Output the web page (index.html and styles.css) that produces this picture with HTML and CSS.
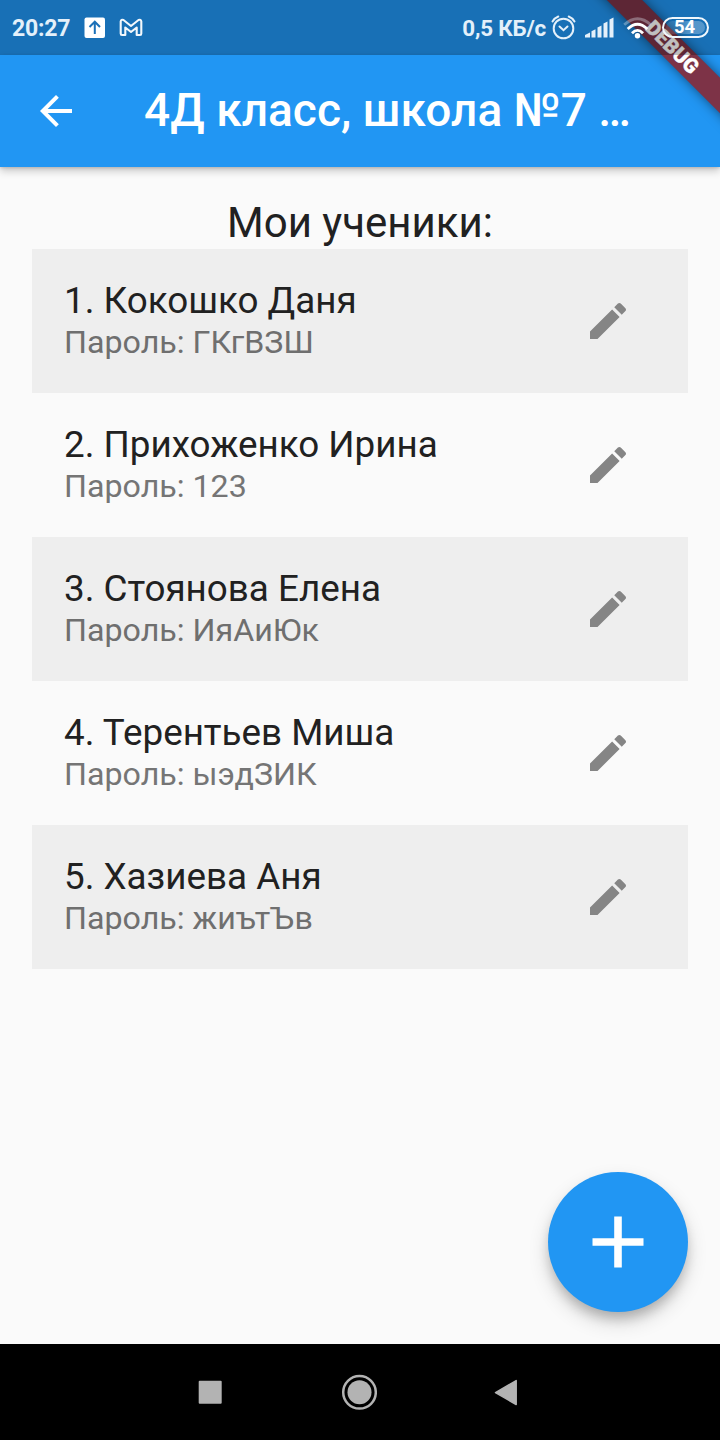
FILE: index.html
```html
<!DOCTYPE html>
<html lang="ru">
<head>
<meta charset="utf-8">
<title>Мои ученики</title>
<link rel="stylesheet" href="styles.css">
</head>
<body>
<svg class="defs" width="0" height="0"><symbol id="pencil" viewBox="0 0 24 24"><path d="M3 17.250V21h3.750L17.810 9.940l-3.750-3.750L3 17.250zM20.710 7.040c.39-.39.39-1.020 0-1.410l-2.340-2.340c-.39-.39-1.020-.39-1.410 0l-1.830 1.830 3.750 3.750 1.830-1.830z"/></symbol></svg>
<div class="screen">
  <div class="banner-clip"><div class="banner">DEBUG</div></div>
  <header class="statusbar">
    <span class="clock">20:27</span>
    <svg class="upload" width="22" height="22" viewBox="0 0 22 22"><rect x=".5" y=".5" width="20.5" height="20.5" rx="2" fill="#fff"/><path d="M10.8 17V5M5.500 10l5.300-5.300L16 10" fill="none" stroke="#1b70b8" stroke-width="2"/></svg>
    <svg class="mail" width="24" height="20" viewBox="0 0 24 20"><path d="M1.700 3.500Q2 1 4.500 2L12 8l7.500-6Q22 1 22.300 3.500V15.500Q22.300 17 21 17H17.700V9.500L12 14 6.300 9.500V17H3Q1.700 17 1.700 15.500Z" fill="none" stroke="#f3f8fc" stroke-width="2.100" stroke-linejoin="round"/></svg>
    <span class="speed">0,5 КБ/с</span>
    <svg class="alarm" width="25" height="25" viewBox="0 0 25 25" fill="none" stroke="#e4f0fa" stroke-width="2"><circle cx="12.500" cy="13.500" r="9.800"/><path d="M8.500 11.500l4 3.700 4-3.700M1.500 6.500Q3.500 3 7.300 1.500M17.700 1.500Q21.500 3 23.500 6.500" stroke-linecap="round"/></svg>
    <svg class="signal" width="29" height="21" viewBox="0 0 29 21" fill="#e4f0fa"><path d="M0 20.500v-2.500l5-2.500v5zM6.500 20.500v-6.300l4-2v8.300zM12.500 20.500v-10l4-2v12zM18.500 20.500V6.500l4-2v16zM24.500 20.500V2.500l4-2v20z"/></svg>
    <svg class="wifi" width="30" height="22" viewBox="0 0 30 22" fill="none" stroke="#e4f0fa" stroke-width="2.800"><path d="M1.200 7.800Q14.500-4.200 27.800 7.800" opacity=".35"/><path d="M4.700 12Q14.500 2.500 24.300 12M9 16.200Q14.500 10.500 20 16.200" stroke="#fff"/><circle cx="14.500" cy="18.700" r="2.700" fill="#fff" stroke="none"/></svg>
    <span class="battery"><span class="charge">54</span></span>
  </header>
  <div class="appbar">
    <svg class="back" width="48" height="48" viewBox="0 0 24 24"><path fill="#fff" d="M20 11H7.830l5.590-5.590L12 4l-8 8 8 8 1.410-1.410L7.830 13H20v-2z"/></svg>
    <h1 class="title">4Д класс, школа №7 …</h1>
  </div>
  <main class="content">
    <h2 class="heading">Мои ученики:</h2>
    <ul class="students">
      <li class="student"><div class="info"><div class="name">1. Кокошко Даня</div><div class="password">Пароль: ГКгВЗШ</div></div><svg class="edit"><use href="#pencil"/></svg></li>
      <li class="student"><div class="info"><div class="name">2. Прихоженко Ирина</div><div class="password">Пароль: 123</div></div><svg class="edit"><use href="#pencil"/></svg></li>
      <li class="student"><div class="info"><div class="name">3. Стоянова Елена</div><div class="password">Пароль: ИяАиЮк</div></div><svg class="edit"><use href="#pencil"/></svg></li>
      <li class="student"><div class="info"><div class="name">4. Терентьев Миша</div><div class="password">Пароль: ыэдЗИК</div></div><svg class="edit"><use href="#pencil"/></svg></li>
      <li class="student"><div class="info"><div class="name">5. Хазиева Аня</div><div class="password">Пароль: жиътЪв</div></div><svg class="edit"><use href="#pencil"/></svg></li>
    </ul>
    <button class="fab" aria-label="Добавить"><svg width="52" height="52" viewBox="0 0 52 52"><path d="M22.200 .5h7.600v21.700H51.500v7.600H29.800V51.500h-7.600V29.800H.5v-7.600h21.700z" fill="#fff"/></svg></button>
  </main>
  <nav class="navbar">
    <svg width="24" height="24" viewBox="0 0 24 24"><rect x=".7" y=".7" width="23" height="23" rx="1" fill="#b3b3b3"/></svg>
    <svg width="38" height="36" viewBox="0 0 38 36"><circle cx="20.500" cy="18.300" r="16.300" fill="none" stroke="#b3b3b3" stroke-width="2.500"/><circle cx="20.500" cy="18.300" r="12" fill="#b3b3b3"/></svg>
    <svg width="24" height="28" viewBox="0 0 24 28"><path d="M1.500 14.600L22.200 2.600v24z" fill="#b3b3b3" stroke="#b3b3b3" stroke-width="1.500" stroke-linejoin="round"/></svg>
  </nav>
</div>
</body>
</html>
```
FILE: styles.css
```css
* { box-sizing: border-box; }
body { margin: 0; font-family: Roboto, "Noto Sans", sans-serif; }
.defs { position: absolute; }
.screen { position: relative; width: 720px; height: 1440px; display: flex; flex-direction: column; background: #fafafa; overflow: hidden; }
.statusbar { position: relative; z-index: 3; height: 55px; flex: none; display: flex; align-items: center; padding: 0 11px 0 12px; background: rgba(0, 0, 0, .25); color: #e4f0fa; }
.screen::before { content: ""; position: absolute; top: 0; left: 0; width: 100%; height: 55px; background: #2196f3; z-index: 1; }
.clock { font-size: 23px; font-weight: 700; letter-spacing: -.2px; padding-top: 2px; }
.upload { margin-left: 13.5px; }
.mail { margin-left: 13px; }
.speed { margin-left: auto; font-size: 22.4px; font-weight: 700; letter-spacing: -.2px; white-space: nowrap; padding-top: 1px; }
.alarm { margin-left: 5px; }
.signal { margin-left: 9px; }
.wifi { margin-left: 9px; }
.battery { margin-left: 9px; width: 47px; height: 21px; border: 2px solid #f0f7fc; border-radius: 11px; padding: 2px; flex: none; }
.charge { display: flex; height: 13px; width: 39px; border-radius: 7px; background: linear-gradient(90deg, rgba(228, 240, 250, .12) 30%, rgba(228, 240, 250, .3) 60%); align-items: center; justify-content: center; font-size: 18.5px; font-weight: 700; line-height: 13px; padding-right: 2px; color: #fff; }
.banner-clip { position: absolute; z-index: 2; top: 0; right: 0; width: 220px; height: 220px; overflow: hidden; pointer-events: none; }
.banner { position: absolute; left: 52px; top: 35px; width: 240px; height: 25px; transform: rotate(45deg); background: #7d3347; box-shadow: 0 0 12px rgba(0, 0, 0, .5); color: #fff; font-size: 20.4px; font-weight: 900; -webkit-text-stroke: .4px #fff; line-height: 25px; text-align: center; }
.appbar { position: relative; z-index: 1; height: 112px; flex: none; display: flex; align-items: center; padding: 0 32px; background: #2196f3; box-shadow: 0 4px 8px rgba(0, 0, 0, .2), 0 1px 3px rgba(0, 0, 0, .15); }
.title { margin: -2px 0 0 64px; font-size: 46px; font-weight: 500; letter-spacing: .05px; color: #fff; white-space: nowrap; line-height: 54px; }
.content { position: relative; flex: 1; padding: 32px 32px 0; color: #212121; }
.heading { margin: 0; height: 50px; line-height: 48px; font-size: 42px; font-weight: 400; text-align: center; }
.students { list-style: none; margin: 0; padding: 0; }
.student { height: 144px; display: flex; align-items: flex-start; justify-content: space-between; padding: 30px 56px 0 32px; }
.student:nth-child(odd) { background: #eee; }
.name { font-size: 36.8px; line-height: 43px; white-space: nowrap; }
.password { font-size: 32.2px; line-height: 40px; color: #757575; white-space: nowrap; }
.student:nth-child(odd) .password { color: #6f6f6f; }
.edit { width: 48px; height: 48px; margin-top: 18px; fill: #858585; }
.fab { position: absolute; right: 32px; bottom: 32px; width: 140px; height: 140px; border: 0; border-radius: 50%; padding: 0; background: #2196f3; display: flex; align-items: center; justify-content: center; box-shadow: 0 8px 12px -2px rgba(0, 0, 0, .2), 0 10px 20px rgba(0, 0, 0, .16); }
.navbar { position: relative; z-index: 1; height: 96px; flex: none; display: flex; align-items: center; justify-content: space-between; padding: 0 202px 0 198px; background: #000; }
```
